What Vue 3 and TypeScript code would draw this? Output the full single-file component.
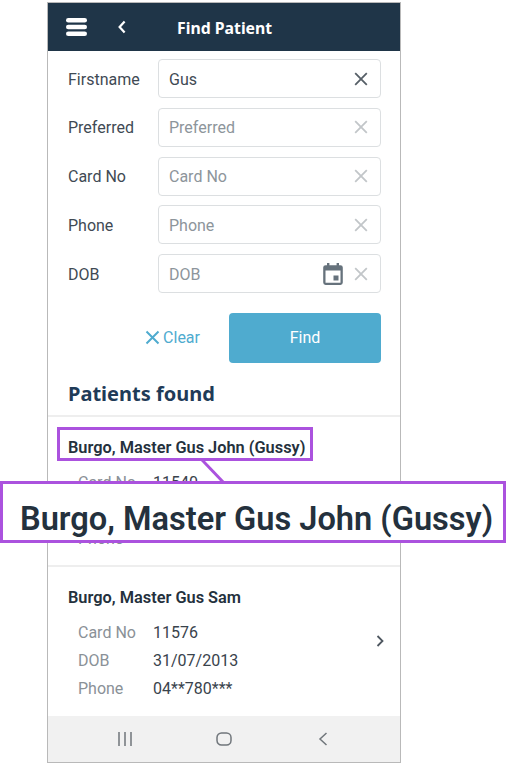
<script setup lang="ts">
interface Field {
  label: string
  value: string
  date?: boolean
}

interface Patient {
  name: string
  cardNo: string
  dob: string
  phone: string
}

const fields: Field[] = [
  { label: 'Firstname', value: 'Gus' },
  { label: 'Preferred', value: '' },
  { label: 'Card No', value: '' },
  { label: 'Phone', value: '' },
  { label: 'DOB', value: '', date: true },
]

const patients: Patient[] = [
  { name: 'Burgo, Master Gus John (Gussy)', cardNo: '11540', dob: '', phone: '' },
  { name: 'Burgo, Master Gus Sam', cardNo: '11576', dob: '31/07/2013', phone: '04**780***' },
]
</script>

<template>
  <div class="page">
    <div class="phone">
      <header class="topbar">
        <svg class="menu" width="22" height="18" viewBox="0 0 22 18">
          <rect x="0" y="0" width="21" height="4.6" rx="2.3" />
          <rect x="0" y="6.7" width="21" height="4.6" rx="2.3" />
          <rect x="0" y="13.4" width="21" height="4.6" rx="2.3" />
        </svg>
        <svg class="back" width="8" height="14" viewBox="0 0 8 14">
          <path d="M6.6 1.4 1.6 7l5 5.6" />
        </svg>
        <span class="title">Find Patient</span>
      </header>

      <form class="form" @submit.prevent>
        <div v-for="f in fields" :key="f.label" class="row">
          <label class="label">{{ f.label }}</label>
          <div class="box">
            <input class="input" :value="f.value" :placeholder="f.label" />
            <svg v-if="f.date" class="cal" width="20" height="22" viewBox="0 0 20 22">
              <path d="M4 0h2.400v2.200h7.200V0H16v2.200h1.400A2.400 2.400 0 0 1 19.800 4.600v15a2.400 2.400 0 0 1-2.400 2.400H2.600A2.400 2.400 0 0 1 .2 19.600v-15A2.400 2.400 0 0 1 2.600 2.200H4zM2.500 7.400v12.300h15V7.400zM10.500 12.500h5v5h-5z" fill-rule="evenodd" />
            </svg>
            <svg class="x" :class="{ dark: f.value }" width="14" height="14" viewBox="0 0 14 14">
              <path d="M1.200 1.200l11.600 11.600M12.800 1.200 1.200 12.800" />
            </svg>
          </div>
        </div>

        <div class="actions">
          <button type="button" class="clear">
            <svg width="15" height="15" viewBox="0 0 15 15">
              <path d="M1.500 1.500l12 12M13.500 1.500l-12 12" />
            </svg>
            Clear
          </button>
          <button type="button" class="find">Find</button>
        </div>
      </form>

      <h2 class="heading">Patients found</h2>

      <div class="results">
        <div v-for="p in patients" :key="p.cardNo" class="card">
          <div class="info">
            <div class="name">{{ p.name }}</div>
            <div class="lines">
              <div class="line"><span class="key">Card No</span><span class="val">{{ p.cardNo }}</span></div>
              <div class="line"><span class="key">DOB</span><span class="val">{{ p.dob }}</span></div>
              <div class="line"><span class="key">Phone</span><span class="val">{{ p.phone }}</span></div>
            </div>
          </div>
          <svg class="chev" width="8" height="12" viewBox="0 0 8 12">
            <path d="M1.500 1 6.500 6l-5 5" />
          </svg>
        </div>
      </div>

      <nav class="navbar">
        <svg width="16" height="14" viewBox="0 0 16 14">
          <path d="M2 0v14M8 0v14M14 0v14" />
        </svg>
        <svg width="16" height="14" viewBox="0 0 16 14">
          <rect x="1" y="1" width="14" height="12" rx="4.500" />
        </svg>
        <svg width="10" height="14" viewBox="0 0 10 14">
          <path d="M8.500 1 2 7l6.500 6" />
        </svg>
      </nav>
    </div>

    <!-- magnified callout over the first patient -->
    <div class="mark"></div>
    <svg class="pointer" width="40" height="30" viewBox="0 0 40 30">
      <path d="M1 0 24 24" />
    </svg>
    <div class="zoomed">Burgo, Master Gus John (Gussy)</div>
  </div>
</template>

<style>
html,
body {
  margin: 0;
  background: #fff;
}
</style>

<style scoped>
.page {
  position: relative;
  width: 506px;
  height: 763px;
  overflow: hidden;
  font-family: Roboto, "Liberation Sans", sans-serif;
  background: #fff;
}

.phone {
  box-sizing: border-box;
  width: 354px;
  height: 761px;
  margin: 2px 0 0 47px;
  border: 1px solid #b9b9b9;
  display: flex;
  flex-direction: column;
  overflow: hidden;
}

.topbar {
  flex: none;
  height: 48px;
  background: #1f3548;
  display: flex;
  align-items: center;
  padding-left: 18px;
}

.menu {
  fill: #fff;
}

.back {
  margin-left: 30px;
  fill: none;
  stroke: #fff;
  stroke-width: 2.200;
}

.title {
  margin-left: 51px;
  padding-top: 1px;
  color: #fff;
  font-family: "Noto Sans", "Open Sans", sans-serif;
  font-size: 15.800px;
  font-weight: 700;
}

.form {
  padding: 8px 19px 0 20px;
  display: flex;
  flex-direction: column;
  gap: 9.750px;
}

.row {
  display: flex;
  align-items: center;
  height: 39px;
}

.label {
  width: 90px;
  flex: none;
  padding-top: 1px;
  font-size: 16px;
  color: #3f4a54;
}

.box {
  box-sizing: border-box;
  flex: 1;
  min-width: 0;
  height: 39px;
  border: 1px solid #dcdfe1;
  border-radius: 4px;
  display: flex;
  align-items: center;
  padding: 0 12px 0 10px;
  gap: 11px;
}

.input {
  flex: 1;
  width: 0;
  min-width: 0;
  border: 0;
  outline: 0;
  padding: 1px 0 0;
  background: transparent;
  font-family: inherit;
  font-size: 16px;
  color: #3f4a54;
}

.input::placeholder {
  color: #8d959b;
  opacity: 1;
}

.cal {
  flex: none;
  fill: #66727c;
}

.x {
  flex: none;
  fill: none;
  stroke: #c2c6c9;
  stroke-width: 1.800;
}

.x.dark {
  stroke: #565f67;
}

.actions {
  display: flex;
  justify-content: flex-end;
  align-items: center;
  margin-top: 10px;
  gap: 29px;
}

.clear {
  display: flex;
  align-items: center;
  gap: 3px;
  border: 0;
  padding: 0;
  background: none;
  color: #4fabcf;
  font-family: inherit;
  font-size: 16px;
}

.clear svg {
  fill: none;
  stroke: #4fabcf;
  stroke-width: 2;
}

.find {
  width: 152px;
  height: 50px;
  border: 0;
  border-radius: 4px;
  background: #4fabcf;
  color: #fff;
  font-family: inherit;
  font-size: 16px;
}

.heading {
  margin: 17px 0 0;
  padding-left: 20px;
  height: 35px;
  color: #1f3b58;
  font-family: "Noto Sans", "Open Sans", sans-serif;
  font-size: 20px;
  line-height: 27px;
  font-weight: 700;
}

.results {
  flex: 1;
  min-height: 0;
  border-top: 2px solid #eeeeee;
}

.card {
  box-sizing: border-box;
  height: 150px;
  padding: 0 16px 0 20px;
  border-bottom: 2px solid #eeeeee;
  display: flex;
  align-items: center;
  justify-content: space-between;
}

.card:last-child {
  border-bottom-color: transparent;
}

.info {
  padding-top: 8px;
}

.name {
  font-size: 16.350px;
  line-height: 22px;
  font-weight: 600;
  color: #24313d;
}

.lines {
  margin-top: 10px;
  padding-left: 10px;
}

.line {
  display: flex;
  height: 28px;
  align-items: center;
  font-size: 16px;
}

.key {
  width: 75px;
  color: #8a9197;
}

.val {
  color: #39434c;
}

.chev {
  fill: none;
  stroke: #4e5760;
  stroke-width: 1.800;
}

.navbar {
  flex: none;
  height: 46px;
  background: #f1f1f1;
  display: grid;
  grid-template-columns: repeat(3, 99px);
  justify-content: center;
  justify-items: center;
  align-items: center;
}

.navbar svg {
  fill: none;
  stroke: #70767b;
  stroke-width: 1.500;
}

.mark {
  position: absolute;
  left: 57px;
  top: 427px;
  width: 256px;
  height: 34px;
  box-sizing: border-box;
  border: 3px solid #ab52de;
}

.pointer {
  position: absolute;
  left: 201px;
  top: 460px;
  fill: none;
  stroke: #ab52de;
  stroke-width: 3;
}

.zoomed {
  position: absolute;
  left: 0;
  top: 481px;
  box-sizing: border-box;
  width: 506px;
  height: 62px;
  border: 3px solid #ab52de;
  background: #fff;
  color: #24313d;
  font-size: 32.600px;
  font-weight: 600;
  line-height: 70px;
  padding-left: 17px;
  white-space: nowrap;
}
</style>
